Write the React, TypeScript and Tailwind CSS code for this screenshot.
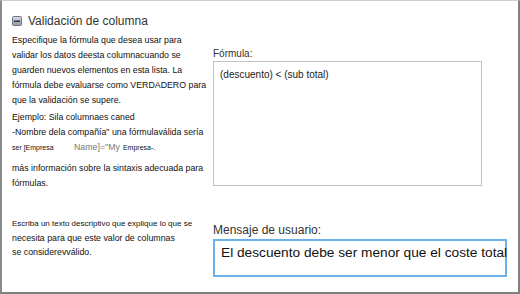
import React from 'react'

// --- Small pieces ---

function CollapseIcon() {
  return (
    <svg width="10" height="10" viewBox="0 0 10 10" className="shrink-0">
      <defs>
        <linearGradient id="cg" x1="0" y1="0" x2="0" y2="1">
          <stop offset="0" stopColor="#d9dde4" />
          <stop offset="1" stopColor="#8d96a3" />
        </linearGradient>
      </defs>
      <rect x="0.5" y="0.5" width="9" height="9" rx="1" fill="url(#cg)" stroke="#6f7784" />
      <rect x="2" y="4.5" width="6" height="1.5" fill="#2f3742" />
    </svg>
  )
}

// --- Component ---

export default function App() {
  return (
    <div
      className="w-[520px] h-[294px] bg-white border-l-2 border-t border-r-2 border-b-2 border-l-[#8a8a8a] border-t-[#d0d0d0] border-r-[#808080] border-b-[#808080] overflow-hidden"
      style={{ fontFamily: '"Liberation Sans", Arial, sans-serif' }}
    >
      {/* Header */}
      <div className="flex items-center gap-[6px] pl-[10px] pt-[12px]">
        <CollapseIcon />
        <span className="text-[12px] leading-[16px] text-[#333]">Validación de columna</span>
      </div>

      {/* Formula row */}
      <div className="flex mt-[4px]">
        <div className="w-[211px] shrink-0 pl-[10px] text-[8.8px] leading-[15px] text-[#111] whitespace-nowrap">
          <p>Especifique la fórmula que desea usar para</p>
          <p>validar los datos deesta columnacuando se</p>
          <p>guarden nuevos elementos en esta lista. La</p>
          <p>fórmula debe evaluarse como VERDADERO para</p>
          <p>que la validación se supere.</p>
          <p className="mt-[2px]">Ejemplo: Sila columnaes caned</p>
          <p>-Nombre dela compañía" una fórmulaválida sería</p>
          <p className="flex items-baseline">
            <span className="text-[7px] w-[62px]">ser [Empresa</span>
            <span className="text-[#777]">Name]="My</span>
            <span className="text-[7px] ml-[3px]">Empresa-.</span>
          </p>
          <p className="mt-[6px]">más información sobre la sintaxis adecuada para</p>
          <p>fórmulas.</p>
        </div>
        <div className="pt-[14px]">
          <div className="text-[10px] leading-[13px] text-[#333]">Fórmula:</div>
          <div className="mt-[1px] w-[269px] h-[125px] border border-[#c2c2c2] px-[6px] py-[6px] text-[10px] leading-[14px] text-[#222]">
            (descuento) &lt; (sub total)
          </div>
        </div>
      </div>

      {/* Message row */}
      <div className="flex mt-[26px]">
        <div className="w-[211px] shrink-0 pl-[10px] text-[8px] leading-[14px] text-[#111] whitespace-nowrap">
          <p>Escriba un texto descriptivo que explique lo que se</p>
          <p className="text-[8.8px] leading-[15px]">necesita para que este valor de columnas</p>
          <p className="text-[8.8px] leading-[13px]">se considerevválido.</p>
        </div>
        <div className="pt-[6px]">
          <div className="text-[12px] leading-[14px] text-[#333]">Mensaje de usuario:</div>
          <div className="mt-[2px] w-[294px] h-[38px] border-2 border-[#6cb0ea] px-[6px] pt-[3px] text-[13.7px] leading-[18px] text-[#111] whitespace-nowrap">
            El descuento debe ser menor que el coste total
          </div>
        </div>
      </div>
    </div>
  )
}
